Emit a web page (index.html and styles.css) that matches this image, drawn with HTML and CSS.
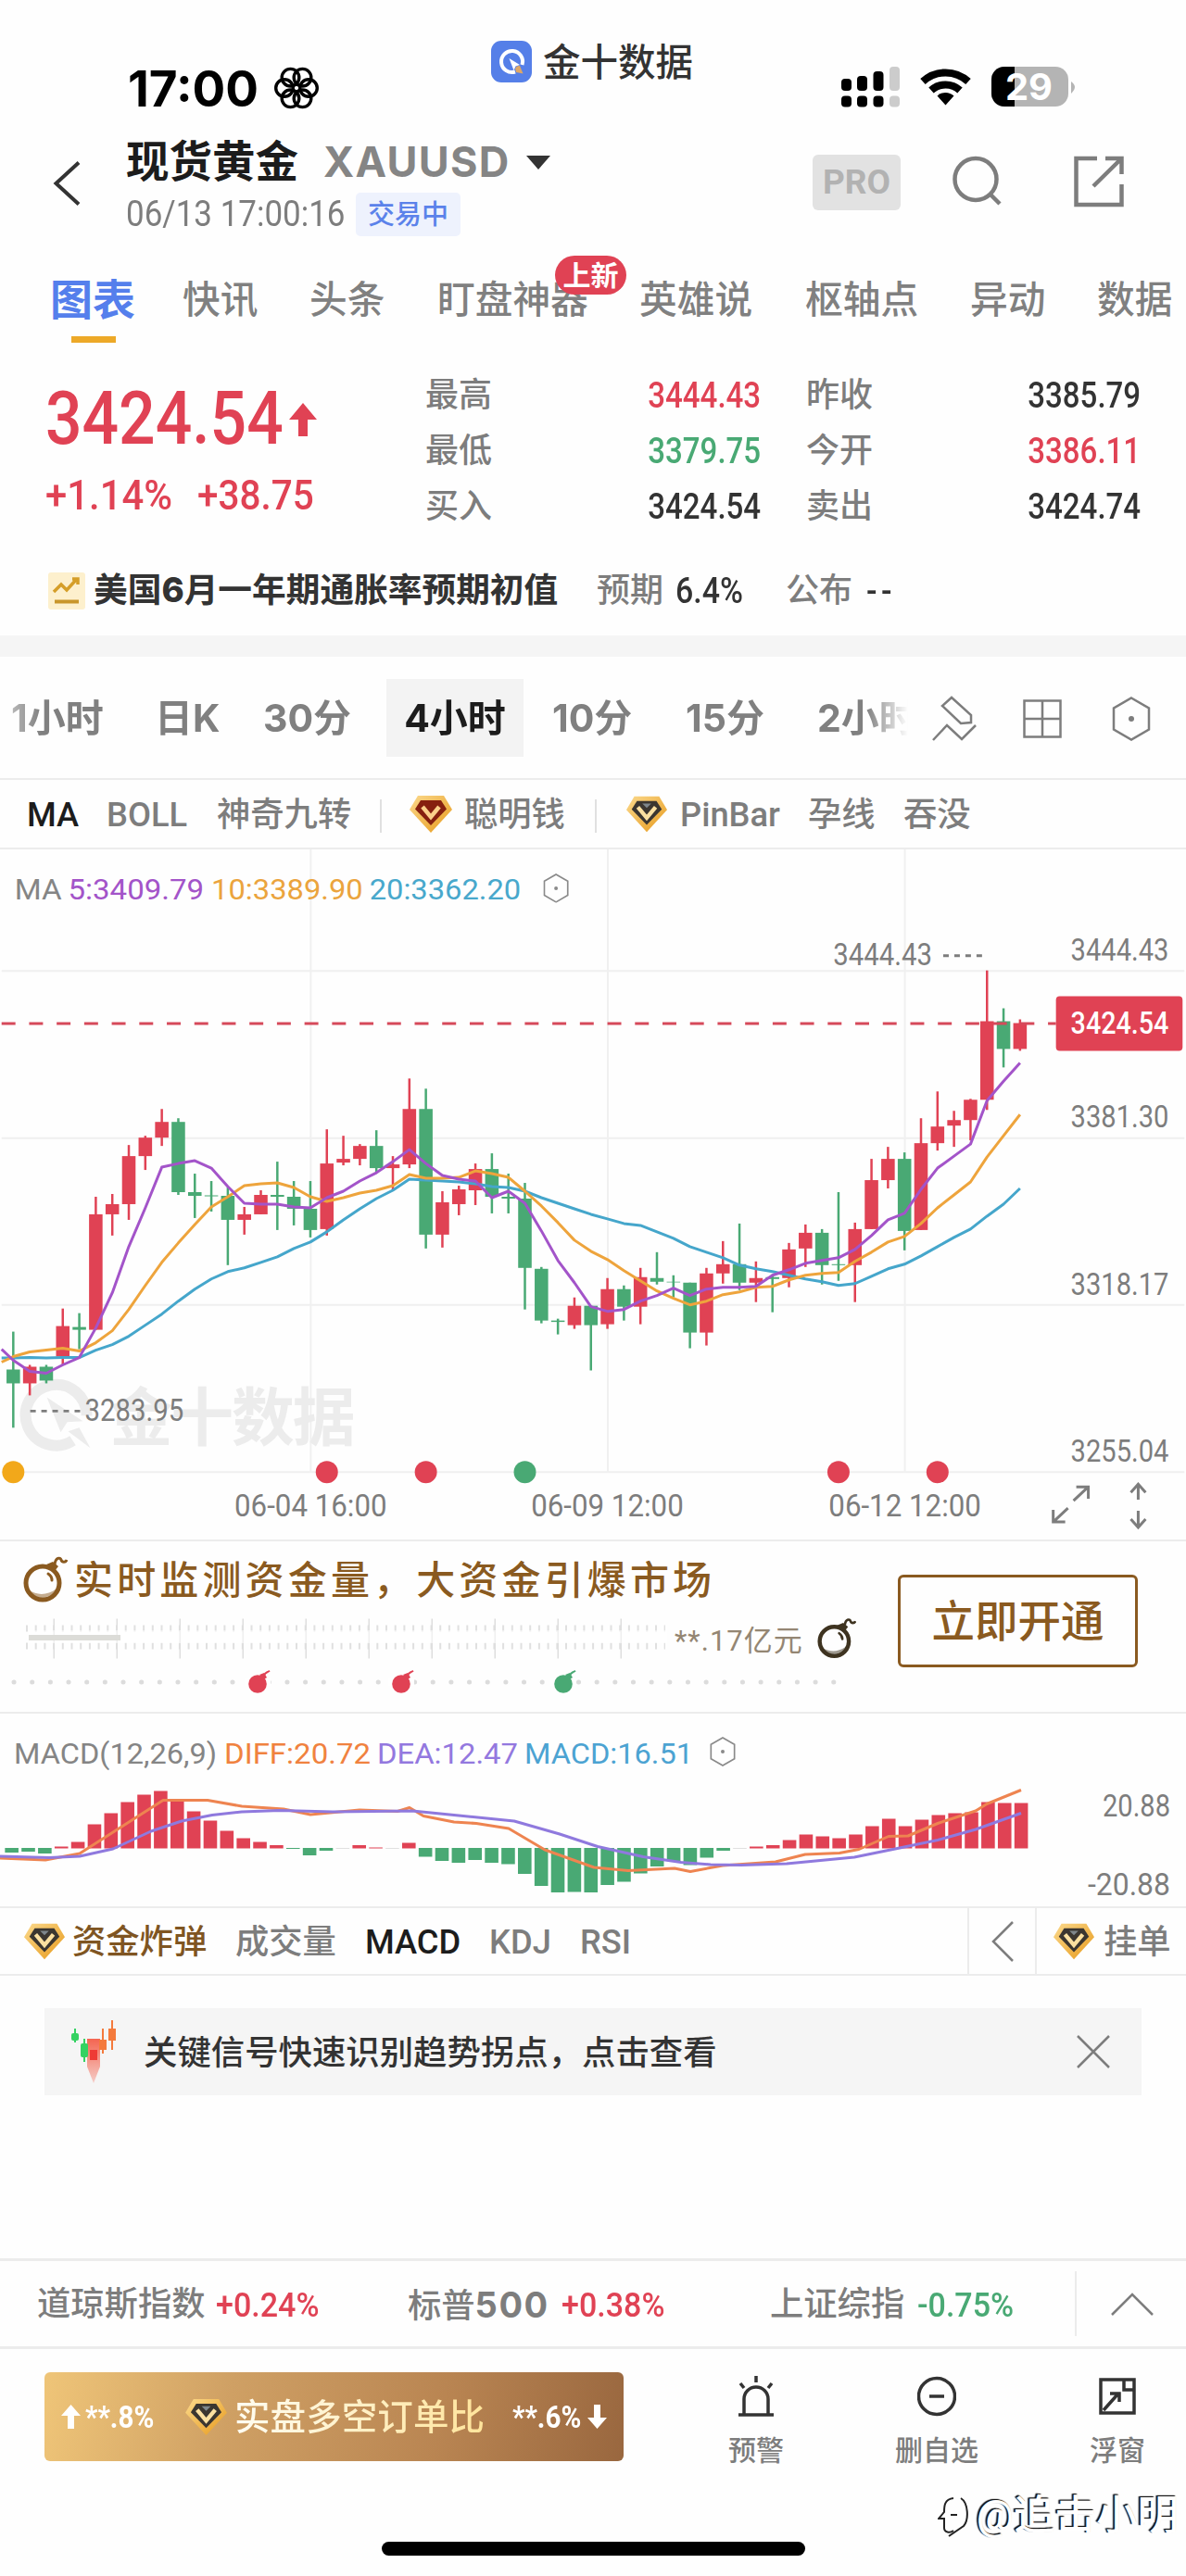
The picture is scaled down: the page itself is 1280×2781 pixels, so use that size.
FILE: index.html
```html
<!DOCTYPE html>
<html lang="zh-CN">

<head>
    <meta charset="UTF-8">
    <meta name="viewport" content="width=device-width, initial-scale=1.0">
    <title>现货黄金 XAUUSD</title>

    <link rel="stylesheet" href="styles.css">
</head>

<body>

    <!-- 公用图标 -->
    <svg class="defs" width="0" height="0">
        <defs>
            <linearGradient id="gold" x1="0" y1="0" x2="1" y2="1">
                <stop offset="0" stop-color="#fbd98c" />
                <stop offset="1" stop-color="#e79a1c" />
            </linearGradient>
            <linearGradient id="fall" x1="0" y1="0" x2="0" y2="1">
                <stop offset="0" stop-color="#f4553f" stop-opacity=".9" />
                <stop offset="1" stop-color="#f4553f" stop-opacity=".25" />
            </linearGradient>
            <symbol id="vip" viewBox="0 0 46 40">
                <path d="M9 0H37L46 15L23 40L0 15Z" fill="url(#gold)" />
                <path d="M12 5H34L40 14.500L23 32L6 14.500Z" fill="#3b3630" />
                <path d="M13 12L23 24L33 12" fill="none" stroke="#fbe0a0" stroke-width="4.500" />
                <path d="M18 8H28L23 13Z" fill="#7f878c" />
            </symbol>
            <symbol id="vip-red" viewBox="0 0 46 40">
                <path d="M9 0H37L46 15L23 40L0 15Z" fill="url(#gold)" />
                <path d="M12 5H34L40 14.500L23 32L6 14.500Z" fill="#86200f" />
                <path d="M14 12L23 23L32 12" fill="none" stroke="#fbd08a" stroke-width="4.500" />
            </symbol>
            <symbol id="hex" viewBox="0 0 42 48">
                <path d="M21 1.500L40 12.500V35.500L21 46.500L2 35.500V12.500Z" fill="none" stroke="currentColor" stroke-width="2.500" />
                <circle cx="21" cy="24" r="3" fill="currentColor" />
            </symbol>
            <symbol id="bomb-line" viewBox="0 0 48 50">
                <circle cx="21" cy="29" r="18" fill="none" stroke="currentColor" stroke-width="5" />
                <path d="M7 37C14 42 26 43 36 35C31 46 13 49 7 37Z" fill="currentColor" opacity=".5" />
                <path d="M25 9L32 6L38 11L34 16Z" fill="currentColor" />
                <path d="M34 9C35 1 40 1 41 4C42 7 46 7 47 4" fill="none" stroke="currentColor" stroke-width="3" />
                <path d="M27 19C30 21 31 23 31 26" fill="none" stroke="currentColor" stroke-width="3" stroke-linecap="round" />
            </symbol>
            <symbol id="bomb" viewBox="0 0 24 25">
                <circle cx="10" cy="15" r="9.800" fill="currentColor" />
                <path d="M12 5L17 3L20 8L17 10Z" fill="currentColor" />
                <path d="M17 6C18 2 20 3 23 .800" fill="none" stroke="currentColor" stroke-width="2" />
            </symbol>
        </defs>
    </svg>

    <!-- 状态栏 -->
    <div class="status">
        <div class="status-time">17:00</div>
        <svg class="status-flower" viewBox="-25 -25 50 50">
            <g fill="none" stroke="#000" stroke-width="3.400">
                <circle cx="-13" cy="0" r="9.300" />
                <circle cx="-6.500" cy="11.300" r="9.300" />
                <circle cx="6.500" cy="11.300" r="9.300" />
                <circle cx="13" cy="0" r="9.300" />
                <circle cx="6.500" cy="-11.300" r="9.300" />
                <circle cx="-6.500" cy="-11.300" r="9.300" />
            </g>
        </svg>
        <div class="brand">
            <svg width="44" height="45" viewBox="0 0 44 45">
                <rect width="44" height="45" rx="11" fill="#557fe8" />
                <path d="M26 33.500A11.500 11.500 0 1 1 33.500 26" fill="none" stroke="#fff" stroke-width="4" />
                <path d="M19.500 19L31 26L26.500 27.500L24.500 32Z" fill="#fff" />
                <path d="M26 30A5 5 0 0 1 31 27L34.500 35.500L27 34Z" fill="#dfa765" />
            </svg>
            <span>金十数据</span>
        </div>
        <svg class="status-right" width="256" height="46" viewBox="906 71 256 46">
            <g fill="#000">
                <rect x="909" y="85" width="11" height="13" rx="4" />
                <rect x="926" y="82" width="11" height="16" rx="4" />
                <rect x="943.500" y="77" width="11" height="21" rx="4" />
                <rect x="909" y="103.500" width="11" height="12" rx="4" />
                <rect x="926" y="103.500" width="11" height="12" rx="4" />
                <rect x="943.500" y="103.500" width="11" height="12" rx="4" />
            </g>
            <rect x="961" y="72" width="11" height="26" rx="4" fill="#ccc" />
            <rect x="961" y="103.500" width="11" height="12" rx="4" fill="#ccc" />
            <g fill="none" stroke="#000" stroke-width="8">
                <path d="M997 88A36 36 0 0 1 1046 88" />
                <path d="M1006 97.500A23 23 0 0 1 1037 97.500" />
            </g>
            <path d="M1012.500 103.500A13 13 0 0 1 1030.500 103.500L1021.500 113.500Z" fill="#000" />
            <rect x="1071" y="72" width="83" height="43" rx="14" fill="#b4b4b4" />
            <path d="M1096 72H1085A14 14 0 0 0 1071 86V101A14 14 0 0 0 1085 115H1096Z" fill="#000" />
            <path d="M1157 88Q1161 91 1161 94T1157 101Z" fill="#b4b4b4" />
            <text x="1086" y="108" textLength="51" lengthAdjust="spacingAndGlyphs" class="battery">29</text>
        </svg>
    </div>

    <!-- 标题 -->
    <div class="head">
        <svg width="30" height="48" viewBox="0 0 30 48">
            <path d="M28 1.500L3.500 24L28 46.500" fill="none" stroke="#333" stroke-width="4" />
        </svg>
        <div class="head-info">
            <div class="head-name">
                <h1>现货黄金</h1>
                <span class="code">XAUUSD</span>
                <i class="caret"></i>
            </div>
            <div class="head-time">
                <span class="num date">06/13 17:00:16</span>
                <span class="trading">交易中</span>
            </div>
        </div>
        <div class="pro">PRO</div>
        <svg width="54" height="56" viewBox="0 0 54 56" fill="none" stroke="#7d7d7d" stroke-width="4.500">
            <circle cx="25" cy="25.500" r="22.500" />
            <path d="M41 42L51 52" />
        </svg>
        <svg width="54" height="56" viewBox="0 0 54 56" fill="none" stroke="#7d7d7d" stroke-width="4.500">
            <path d="M25 3H2.500V53H51.500V31" />
            <path d="M34 3H51.500V20M51 3.500L21 33" />
        </svg>
    </div>

    <!-- 导航 -->
    <div class="nav">
        <a class="active">图表</a>
        <a>快讯</a>
        <a>头条</a>
        <a class="has-tip">盯盘神器<em>上新</em></a>
        <a>英雄说</a>
        <a>枢轴点</a>
        <a>异动</a>
        <a>数据</a>
    </div>

    <!-- 报价 -->
    <div class="quote">
        <div class="quote-main">
            <div class="price red">
                <span class="num">3424.54</span>
                <svg width="30" height="36" viewBox="0 0 30 36"><path d="M15 0L30 18H20V36H10V18H0Z" fill="#e04254" /></svg>
            </div>
            <div class="change red"><span class="num">+1.14%</span><span class="num">+38.75</span></div>
        </div>
        <div class="quote-list">
            <span>最高</span><b class="num red">3444.43</b><span>昨收</span><b class="num">3385.79</b>
            <span>最低</span><b class="num green">3379.75</b><span>今开</span><b class="num red">3386.11</b>
            <span>买入</span><b class="num">3424.54</b><span>卖出</span><b class="num">3424.74</b>
        </div>
    </div>

    <div class="news">
        <svg width="40" height="40" viewBox="0 0 40 40">
            <rect width="40" height="40" rx="3" fill="#fdf0cd" />
            <path d="M6 21L14 13L20 19L31 7M26 7H32V13" fill="none" stroke="#d59e28" stroke-width="3.500" />
            <path d="M7 31.500H33" stroke="#c9962b" stroke-width="4" />
        </svg>
        <strong>美国<i>6</i>月一年期通胀率预期初值</strong>
        <span>预期</span><b class="num">6.4%</b>
        <span>公布</span><b class="num none">--</b>
    </div>

    <div class="band"></div>

    <!-- 周期 -->
    <div class="period">
        <div class="period-list">
            <a>1小时</a>
            <a>日K</a>
            <a>30分</a>
            <a class="on">4小时</a>
            <a>10分</a>
            <a>15分</a>
            <a>2小时</a>
        </div>
        <div class="period-tool">
            <svg width="48" height="50" viewBox="0 0 48 50" fill="none" stroke="#7d7d7d" stroke-width="2.500">
                <path d="M21 2L42 21V29L31 30L11 11Z" />
                <path d="M1 48L16 32L32 47L47 32" />
            </svg>
            <svg width="42" height="42" viewBox="0 0 42 42" fill="none" stroke="#7d7d7d" stroke-width="2.500">
                <path d="M1.500 1.500H40.500V40.500H1.500ZM21 1.500V40.500M1.500 21H40.500" />
            </svg>
            <svg width="42" height="48"><use href="#hex" /></svg>
        </div>
    </div>

    <!-- 主图指标 -->
    <div class="target">
        <a class="on">MA</a>
        <a>BOLL</a>
        <a>神奇九转</a>
        <i class="line"></i>
        <svg width="46" height="40"><use href="#vip-red" /></svg>
        <a>聪明钱</a>
        <i class="line"></i>
        <svg width="44" height="40"><use href="#vip" /></svg>
        <a>PinBar</a>
        <a>孕线</a>
        <a>吞没</a>
    </div>

    <!-- K线图 -->
    <svg class="kline" width="1280" height="747" viewBox="0 917 1280 747">
        <path class="grid" d="M334.500 917V1591M656 917V1591M977.500 917V1591M0 1048.500H1280M0 1229.500H1280M0 1410H1280M0 1591H1280" />
        <g class="watermark">
            <path d="M77 1557A33 33 0 1 1 92 1530" />
            <path class="solid" d="M49 1510L88 1536L71 1537L64 1548ZM72 1547L84 1543L96 1565Z" />
            <text x="117" y="1557" textLength="266">金十数据</text>
        </g>
        <g id="candles"></g>
        <path class="now" d="M0 1105.500H1141" />
        <g id="ma"></g>
        <g id="marks"></g>

        <g class="legend">
            <text x="14" y="971" textLength="51" lengthAdjust="spacingAndGlyphs" fill="#858585">MA</text>
            <text x="72" y="971" textLength="147" lengthAdjust="spacingAndGlyphs" fill="#a354c9">5:3409.79</text>
            <text x="227" y="971" textLength="164" lengthAdjust="spacingAndGlyphs" fill="#eba43d">10:3389.90</text>
            <text x="398" y="971" textLength="164" lengthAdjust="spacingAndGlyphs" fill="#48a8cc">20:3362.20</text>
        </g>
        <use href="#hex" x="586" y="943" width="28" height="32" color="#8a8a8a" />

        <g class="din">
            <text x="900" y="1042.500" textLength="107" lengthAdjust="spacingAndGlyphs">3444.43</text>
            <text x="90" y="1536" textLength="107" lengthAdjust="spacingAndGlyphs">3283.95</text>
            <text x="1157" y="1037" textLength="106" lengthAdjust="spacingAndGlyphs">3444.43</text>
            <text x="1157" y="1218" textLength="106" lengthAdjust="spacingAndGlyphs">3381.30</text>
            <text x="1157" y="1399" textLength="106" lengthAdjust="spacingAndGlyphs">3318.17</text>
            <text x="1157" y="1580" textLength="106" lengthAdjust="spacingAndGlyphs">3255.04</text>
            <text x="252" y="1638.500" textLength="165" lengthAdjust="spacingAndGlyphs">06-04 16:00</text>
            <text x="573" y="1638.500" textLength="165" lengthAdjust="spacingAndGlyphs">06-09 12:00</text>
            <text x="895" y="1638.500" textLength="165" lengthAdjust="spacingAndGlyphs">06-12 12:00</text>
        </g>
        <path class="dash" d="M1019 1032H1062M31 1525H86" />
        <rect x="1141" y="1076" width="137" height="59" rx="4" fill="#e04254" />
        <text class="din now-text" x="1157" y="1116.500" textLength="106" lengthAdjust="spacingAndGlyphs">3424.54</text>

        <g fill="none" stroke="#7d7d7d" stroke-width="3">
            <path d="M1160 1622L1176 1607M1163 1607H1176V1620M1154 1630L1138 1645M1138 1632V1645H1151" />
            <path d="M1230 1621V1605M1222 1613L1230 1604L1238 1613M1230 1633V1650M1222 1642L1230 1651L1238 1642" />
        </g>
    </svg>

    <!-- 推广 -->
    <div class="promo">
        <div class="promo-left">
            <div class="promo-title">
                <svg width="48" height="50"><use href="#bomb-line" /></svg>
                <span>实时监测资金量，大资金引爆市场</span>
            </div>
            <div class="promo-ruler">
                <svg width="694" height="44" viewBox="26 1745 694 44">
                    <path d="M28 1756H718M28 1775H718" stroke="#e0e0e0" stroke-width="7" stroke-dasharray="2 7.700" />
                    <path d="M57.500 1767H718" stroke="#dedede" stroke-width="43" stroke-dasharray="1.500 66.500" />
                    <rect x="31" y="1758" width="690" height="14" fill="#fff" opacity=".5" />
                    <rect x="31" y="1763" width="99" height="6" fill="#dcdcd8" />
                </svg>
                <span>**.17亿元</span>
                <svg class="dark" width="42" height="45"><use href="#bomb-line" /></svg>
            </div>
            <svg class="promo-dots" width="920" height="26" viewBox="0 1803 920 26">
                <path d="M15 1816H915" stroke="#dcdcdc" stroke-width="5" stroke-linecap="round" stroke-dasharray="0.100 19.560" />
                <path d="M264 1816H292M419 1816H447M594 1816H622" stroke="#fff" stroke-width="8" />
                <use href="#bomb" x="268" y="1803" width="24" height="25" color="#e04254" />
                <use href="#bomb" x="423" y="1803" width="24" height="25" color="#e04254" />
                <use href="#bomb" x="598" y="1803" width="24" height="25" color="#49a974" />
            </svg>
        </div>
        <a class="promo-btn">立即开通</a>
    </div>

    <!-- MACD -->
    <svg class="macd" width="1280" height="208" viewBox="0 1850 1280 208">
        <g class="legend">
            <text x="15" y="1904" textLength="219" lengthAdjust="spacingAndGlyphs" fill="#858585">MACD(12,26,9)</text>
            <text x="242" y="1904" textLength="158" lengthAdjust="spacingAndGlyphs" fill="#f0823f">DIFF:20.72</text>
            <text x="407" y="1904" textLength="152" lengthAdjust="spacingAndGlyphs" fill="#9378df">DEA:12.47</text>
            <text x="566" y="1904" textLength="182" lengthAdjust="spacingAndGlyphs" fill="#4ca3d2">MACD:16.51</text>
        </g>
        <use href="#hex" x="766" y="1875" width="28" height="32" color="#8a8a8a" />
        <g id="macd-bars"></g>
        <g id="macd-lines"></g>
        <g class="din">
            <text x="1190" y="1960.500" textLength="73" lengthAdjust="spacingAndGlyphs">20.88</text>
            <text x="1174" y="2046" textLength="89" lengthAdjust="spacingAndGlyphs">-20.88</text>
        </g>
    </svg>

    <!-- 副图指标 -->
    <div class="sub">
        <svg width="44" height="40"><use href="#vip" /></svg>
        <a class="brown">资金炸弹</a>
        <a>成交量</a>
        <a class="on">MACD</a>
        <a>KDJ</a>
        <a>RSI</a>
        <div class="sub-back">
            <svg width="24" height="44" viewBox="0 0 24 44"><path d="M23 1L2 22L23 43" fill="none" stroke="#7d7d7d" stroke-width="2.500" /></svg>
        </div>
        <svg width="44" height="40"><use href="#vip" /></svg>
        <a>挂单</a>
    </div>

    <!-- 提示 -->
    <div class="notice">
        <svg width="52" height="68" viewBox="0 0 52 68">
            <path d="M18 20H32V50L25 68L18 50Z" fill="url(#fall)" />
            <path d="M5 9V24M15 20V45" stroke="#35d262" stroke-width="2" />
            <rect x="1" y="14" width="8" height="8" rx="2" fill="#35d262" />
            <rect x="11" y="25" width="8" height="15" rx="2" fill="#35d262" />
            <path d="M35 9V36M45 0V32" stroke="#f47a3c" stroke-width="2" />
            <rect x="31" y="21" width="8" height="11" fill="#f47a3c" />
            <rect x="41" y="9" width="8" height="13" fill="#f47a3c" />
            <rect x="21" y="32" width="8" height="11" fill="#ee3b35" />
        </svg>
        <span>关键信号快速识别趋势拐点，点击查看</span>
        <svg width="36" height="36" viewBox="0 0 36 36"><path d="M1 1L35 35M35 1L1 35" stroke="#7d7d7d" stroke-width="2.500" /></svg>
    </div>

    <!-- 指数 -->
    <div class="index">
        <span>道琼斯指数</span><b class="num red">+0.24%</b>
        <span>标普<i>500</i></span><b class="num red">+0.38%</b>
        <span>上证综指</span><b class="num green">-0.75%</b>
        <div class="index-more">
            <svg width="46" height="25" viewBox="0 0 46 25"><path d="M1 24L23 2L45 24" fill="none" stroke="#7d7d7d" stroke-width="2.500" /></svg>
        </div>
    </div>

    <!-- 底部 -->
    <div class="foot">
        <div class="order">
            <svg width="21" height="26" viewBox="0 0 21 26"><path d="M10.500 0L21 12H14V26H7V12H0Z" fill="#fff" /></svg>
            <b class="num">**.8%</b>
            <svg width="45" height="39"><use href="#vip" /></svg>
            <span>实盘多空订单比</span>
            <b class="num">**.6%</b>
            <svg width="21" height="26" viewBox="0 0 21 26"><path d="M10.500 26L0 14H7V0H14V14H21Z" fill="#fff" /></svg>
        </div>
        <a>
            <svg width="42" height="44" viewBox="0 0 42 44" fill="none" stroke="#333" stroke-width="3.500">
                <path d="M2 42H40M8 41V25A13 13 0 0 1 34 25V41M21 0V7M4 8L8 13M38 8L34 13" />
            </svg>
            预警
        </a>
        <a>
            <svg width="42" height="44" viewBox="0 0 42 44" fill="none" stroke="#333" stroke-width="3.500">
                <circle cx="21" cy="22" r="19.500" />
                <path d="M13 22H29" />
            </svg>
            删自选
        </a>
        <a>
            <svg width="42" height="44" viewBox="0 0 42 44" fill="none" stroke="#333" stroke-width="3.500">
                <path d="M3 4H39V40H3Z" />
                <path d="M28 4V15H39M6 37L22 19M13 19H23V28" />
            </svg>
            浮窗
        </a>
    </div>

    <div class="home"></div>
    <div class="sign">
        <svg width="36" height="48" viewBox="0 0 36 48" fill="none" stroke="#222" stroke-width="2">
            <path d="M17 5C7 6 7 14 7 20L1 27H7V37C7 42 13 43 17 40M25 5C33 10 34 28 28 35L12 46M14 23H21" />
        </svg>
        <span>@追击小明</span>
    </div>

    <script src="chart.js"></script>

</body>

</html>
```

FILE: styles.css
```css
* {
    box-sizing: border-box;
}

body {
    width: 1280px;
    height: 2781px;
    margin: 0;
    overflow: hidden;
    position: relative;
    background-color: #fefefe;
    color: #333;
    font-family: Roboto, "Noto Sans CJK SC", sans-serif;
    line-height: 1;
    white-space: nowrap;
}

h1,
i,
em {
    margin: 0;
    font-style: normal;
}

svg {
    display: block;
    flex-shrink: 0;
}

.defs {
    position: absolute;
}

/* 窄体数字 */

.num {
    display: inline-block;
    font-family: Roboto, sans-serif;
    font-weight: 500;
    transform: scaleX(.87);
    transform-origin: left center;
}

.red {
    color: #e04254;
}

.green {
    color: #49a974;
}

/* 状态栏 */

.status {
    display: grid;
    grid-template-columns: 157px 235px 375px 256px;
    height: 150px;
    padding-left: 138px;
}

.status-time {
    padding-top: 70px;
    font: 700 53px/52px Inter, sans-serif;
    color: #000;
}

.status-flower {
    width: 50px;
    height: 50px;
    margin-top: 70px;
}

.brand {
    display: flex;
    gap: 12px;
    padding-top: 44px;
    font-size: 40.500px;
    font-weight: 500;
    line-height: 49px;
}

.status-right {
    margin-top: 71px;
}

.battery {
    font: 700 39px Inter, sans-serif;
    fill: #fff;
}

/* 标题 */

.head {
    display: grid;
    grid-template-columns: 79px 741px 151px 131px 54px;
    align-items: center;
    height: 115px;
    padding-left: 57px;
}

.head > svg {
    margin-top: -24px;
}

.head > svg:first-child {
    margin-top: -20px;
}

.head-info {
    align-self: start;
}

.head-name {
    display: flex;
    align-items: center;
    height: 50px;
}

.head-name h1 {
    width: 213px;
    font-size: 46.500px;
    font-weight: 700;
    color: #1c1c1c;
}

.code {
    width: 219px;
    font: 700 45px/44px Inter, sans-serif;
    color: #858585;
    letter-spacing: 1.300px;
}

.caret {
    border: 13px solid transparent;
    border-top: 15px solid #333;
    border-bottom: 0;
}

.head-time {
    display: flex;
    align-items: center;
    height: 48px;
    margin-top: 7px;
}

.date {
    width: 248px;
    font-size: 38px;
    font-weight: 400;
    color: #7d7d7d;
    transform: scaleX(.92);
}

.trading {
    width: 113px;
    height: 47px;
    border-radius: 5px;
    background-color: #eef2fd;
    color: #5b82ea;
    font-size: 29px;
    font-weight: 500;
    line-height: 48px;
    text-align: center;
}

.pro {
    width: 95px;
    height: 60px;
    margin-top: -21px;
    border-radius: 6px;
    background-color: #e2e2e2;
    color: #b2b2b2;
    font: 700 37px/60px Roboto, sans-serif;
    text-align: center;
}

/* 导航 */

.nav {
    display: grid;
    grid-template-columns: 143px 137px 138px 218px 179px 178px 137px 95px;
    align-items: center;
    height: 113px;
    padding: 5px 0 0 54px;
    color: #808080;
    font-size: 40.700px;
    font-weight: 500;
}

.nav .active {
    position: relative;
    color: #557fec;
    font-size: 46px;
    font-weight: 700;
}

.nav .active::after {
    position: absolute;
    left: 23px;
    top: 62px;
    width: 48px;
    height: 7px;
    background-color: #eda928;
    content: "";
}

.has-tip {
    position: relative;
}

.has-tip em {
    position: absolute;
    left: 127px;
    top: -28px;
    width: 77px;
    height: 42px;
    border-radius: 21px;
    background-color: #e04254;
    color: #fff;
    font-size: 30px;
    font-weight: 700;
    line-height: 43px;
    text-align: center;
}

/* 报价 */

.quote {
    display: grid;
    grid-template-columns: 410px 1fr;
    height: 207px;
    padding-left: 49px;
}

.price {
    display: flex;
    align-items: center;
    height: 80px;
    margin-top: 34px;
    font-size: 80px;
}

.price .num {
    width: 263px;
}

.price svg {
    margin-top: 2px;
}

.change {
    display: grid;
    grid-template-columns: 164px 1fr;
    margin-top: 20px;
    font-size: 45px;
}

.change .num {
    transform: scaleX(.93);
}

.change .num:last-child {
    transform: scaleX(.9);
}

.quote-list {
    display: grid;
    grid-template-columns: 120px 291px 120px 241px;
    grid-auto-rows: 60px;
    align-items: center;
    padding-top: 19px;
    color: #7d7d7d;
    font-size: 36px;
    font-weight: 500;
}

.quote-list .num {
    justify-self: end;
    color: #333;
    font-size: 38px;
    transform-origin: right center;
}

.quote-list .num:nth-child(4n+2) {
    margin-right: 49px;
}

.quote-list .red {
    color: #e04254;
}

.quote-list .green {
    color: #49a974;
}

.news {
    display: grid;
    grid-template-columns: 49px 543px 85px 119px 87px 60px;
    align-items: center;
    height: 101px;
    padding: 5px 0 0 52px;
    color: #7d7d7d;
    font-size: 36px;
    font-weight: 500;
}

.news strong {
    color: #333;
    font-size: 36.700px;
    font-weight: 700;
}

.news i {
    font-family: Inter, sans-serif;
    font-weight: 800;
}

.news .num {
    color: #333;
    font-size: 39px;
}

.news .none {
    letter-spacing: 5px;
}

.band {
    height: 23px;
    background-color: #f5f5f5;
}

/* 周期 */

.period {
    display: flex;
    height: 133px;
    border-bottom: 2px solid #ececec;
}

.period-list {
    display: grid;
    grid-template-columns: 155px 117px 132px 180px 144px 142px 98px;
    align-items: center;
    width: 980px;
    padding: 1px 0 0 12px;
    overflow: hidden;
    color: #808080;
    font: 700 41px/1 Inter, "Noto Sans CJK SC", sans-serif;
    -webkit-mask-image: linear-gradient(90deg, rgba(0, 0, 0, .4), #000 45px, #000 935px, transparent);
    mask-image: linear-gradient(90deg, rgba(0, 0, 0, .4), #000 45px, #000 935px, transparent);
}

.period-list .on {
    width: 148px;
    height: 84px;
    margin-left: 1px;
    background-color: #f3f3f3;
    color: #1c1c1c;
    line-height: 84px;
    text-align: center;
}

.period-tool {
    display: grid;
    grid-template-columns: 98px 96px 42px;
    align-items: center;
    padding: 2px 0 0 26px;
    color: #7d7d7d;
}

/* 指标 */

.target {
    display: grid;
    grid-template-columns: 86px 119px 176px 32px 59px 141px 34px 58px 138px 103px 80px;
    align-items: center;
    height: 75px;
    padding: 4px 0 0 29px;
    border-bottom: 2px solid #ececec;
    color: #7d7d7d;
    font-size: 36.300px;
    font-weight: 500;
}

.target svg {
    margin-top: -4px;
}

.target .on,
.sub .on {
    color: #1c1c1c;
}

.line {
    width: 2px;
    height: 36px;
    background-color: #e0e0e0;
}

/* K线 */

.kline {
    border-bottom: 2px solid #ececec;
}

.grid {
    fill: none;
    stroke: #f0f0f0;
    stroke-width: 2;
}

.now {
    fill: none;
    stroke: #d6495a;
    stroke-width: 3;
    stroke-dasharray: 15 14.800;
}

.watermark {
    fill: none;
    stroke: #ececec;
    stroke-width: 12;
}

.watermark text,
.watermark .solid {
    fill: #ececec;
    stroke: none;
    font-size: 68px;
    font-weight: 700;
}

.legend {
    font-size: 32px;
}

.din {
    fill: #7d7d7d;
    font-size: 33px;
}

.now-text {
    fill: #fff;
    font-weight: 500;
}

.dash {
    fill: none;
    stroke: #7d7d7d;
    stroke-width: 3;
    stroke-dasharray: 6 6;
}

/* 推广 */

.promo {
    display: flex;
    height: 186px;
    border-bottom: 2px solid #ececec;
}

.promo-left {
    width: 969px;
}

.promo-title {
    display: flex;
    align-items: center;
    gap: 7px;
    height: 50px;
    margin: 16px 0 0 25px;
    color: #8a5a20;
    font-size: 42px;
    font-weight: 500;
    letter-spacing: 4.150px;
}

.promo-title span {
    padding-top: 3px;
}

.promo-ruler {
    display: grid;
    grid-template-columns: 702px 154px 42px;
    align-items: center;
    height: 44px;
    margin: 16px 0 0 26px;
    color: #948673;
    font-size: 31px;
    letter-spacing: 1px;
}

.promo-ruler span {
    padding-top: 5px;
}

.dark {
    color: #3e3320;
}

.promo-dots {
    margin-top: 13px;
}

.promo-btn {
    width: 259px;
    height: 100px;
    margin-top: 36px;
    border: 3px solid #8a5a20;
    border-radius: 6px;
    color: #8a5a20;
    font-size: 46.500px;
    font-weight: 500;
    line-height: 97px;
    text-align: center;
}

/* 副图 */

.sub {
    display: grid;
    grid-template-columns: 52px 176px 140px 134px 98px 418px 93px 54px 80px;
    align-items: center;
    height: 75px;
    padding-left: 26px;
    border-top: 2px solid #ececec;
    border-bottom: 2px solid #ececec;
    color: #7d7d7d;
    font-size: 36.300px;
    font-weight: 500;
}

.sub > a {
    padding-top: 3px;
}

.sub .brown {
    color: #7f5522;
}

.sub-back {
    display: flex;
    align-items: center;
    justify-content: center;
    width: 75px;
    height: 71px;
    border-left: 2px solid #ececec;
    border-right: 2px solid #ececec;
}

.notice {
    display: grid;
    grid-template-columns: 79px 1007px 36px;
    align-items: center;
    width: 1184px;
    height: 94px;
    margin: 35px 48px 176px;
    padding-left: 28px;
    background-color: #f5f5f5;
    font-size: 36.400px;
    font-weight: 500;
}

.notice span {
    padding-top: 5px;
}

.index {
    display: grid;
    grid-template-columns: 193px 207px 166px 225px 159px 170px 120px;
    align-items: center;
    height: 98px;
    padding-left: 40px;
    border-top: 3px solid #ececec;
    border-bottom: 3px solid #ececec;
    color: #7d7d7d;
    font-size: 36.300px;
    font-weight: 500;
}

.index > span,
.index > b {
    padding-top: 3px;
}

.index i {
    font: 700 38px/1 Inter, sans-serif;
    letter-spacing: 1.500px;
}

.index .num {
    font-size: 37px;
    transform: scaleX(.92);
}

.index-more {
    display: flex;
    align-items: center;
    justify-content: center;
    height: 70px;
    padding-left: 2px;
    border-left: 2px solid #ececec;
}

/* 底部 */

.foot {
    display: grid;
    grid-template-columns: 673px 195px 195px 190px;
    height: 207px;
    padding: 25px 0 0 48px;
}

.foot > a {
    display: flex;
    flex-direction: column;
    align-items: center;
    gap: 22px;
    width: 190px;
    padding-top: 4px;
    color: #7d7d7d;
    font-size: 30px;
    font-weight: 500;
}

.order {
    display: grid;
    grid-template-columns: 26px 108px 53px 300px 81px 21px;
    align-items: center;
    width: 625px;
    height: 96px;
    padding-left: 18px;
    border-radius: 6px;
    background: linear-gradient(100deg, #efc578, #cfa064 32%, #b98552 68%, #99673f);
    color: #fff;
}

.order .num {
    font-size: 34px;
    font-weight: 700;
}

.order span {
    justify-self: start;
    padding-top: 2px;
    font-size: 38.600px;
    font-weight: 500;
    background: linear-gradient(90deg, #fffdf2, #ffe49b);
    -webkit-background-clip: text;
    background-clip: text;
    color: transparent;
}

.home {
    width: 457px;
    height: 15px;
    margin: 1px 0 0 412px;
    border-radius: 8px;
    background-color: #000;
}

/* 署名浮在页面右下角 */

.sign {
    display: flex;
    position: absolute;
    right: 8px;
    bottom: 41px;
    align-items: center;
    gap: 6px;
    color: #fff;
    font-size: 44.500px;
    font-weight: 500;
    text-shadow: -1px -1px 1px #111, -2px -1px 1px #222;
}
```

FILE: chart.js
```javascript
//每根K线:最高,实体上沿,实体下沿,最低,涨跌(1涨 0跌)
var candles = [
    [1439, 1480, 1495, 1543, 0], [1475, 1477, 1495, 1508, 1], [1475, 1477, 1492, 1495, 0],
    [1414, 1433, 1466, 1475, 1], [1419, 1434, 1437, 1458, 0], [1293, 1312, 1437, 1437, 1],
    [1290, 1301, 1312, 1335, 1], [1237, 1249, 1301, 1318, 1], [1227, 1229, 1249, 1264, 1],
    [1198, 1212, 1229, 1238, 1], [1208, 1212, 1288, 1291, 0], [1268, 1288, 1292, 1316, 0],
    [1276, 1291.5, 1292.5, 1309, 0], [1283, 1292, 1318, 1367, 0], [1304, 1312, 1318, 1334, 1],
    [1286, 1291, 1312, 1312, 1], [1255, 1291, 1293, 1329, 0], [1276, 1293, 1306, 1324, 0],
    [1276, 1306, 1329, 1337, 0], [1220, 1257, 1328, 1335, 1], [1227, 1252, 1256, 1259, 1],
    [1236, 1238, 1252, 1259, 1], [1221, 1238, 1262, 1267, 0], [1249, 1258, 1262, 1286, 1],
    [1165, 1198, 1258, 1262, 1], [1176, 1198, 1334, 1349, 0], [1287, 1299, 1334, 1348, 1],
    [1281, 1285, 1301, 1313, 1], [1257, 1263, 1286, 1302, 1], [1246, 1263, 1293, 1311, 0],
    [1268, 1293, 1295, 1311, 0], [1278, 1295, 1370, 1415, 0], [1369, 1371, 1427, 1430, 0],
    [1425, 1427, 1428.5, 1442, 0], [1402, 1411, 1432, 1436, 1], [1411, 1411, 1432, 1481, 0],
    [1381, 1393, 1431, 1436, 1], [1389, 1393, 1412, 1427, 0], [1370, 1380, 1412, 1431, 1],
    [1353, 1381, 1385, 1388, 0], [1378, 1385, 1385.7, 1402, 0], [1386, 1386, 1440, 1457, 0],
    [1370, 1376, 1440, 1454, 1], [1341, 1366, 1376, 1387, 1], [1322, 1366, 1386, 1394, 0],
    [1363, 1381, 1386, 1407, 1], [1377, 1380, 1382, 1418, 0], [1343, 1350, 1381, 1391, 1],
    [1323, 1332, 1349, 1369, 1], [1328, 1332, 1367, 1388, 0], [1288, 1366, 1367, 1384, 0],
    [1321, 1328, 1367, 1407, 1], [1252, 1275, 1328, 1328, 1], [1239, 1252, 1275, 1284, 1],
    [1245, 1252, 1330, 1351, 0], [1208, 1235, 1329, 1329, 1], [1179, 1217, 1235, 1243, 1],
    [1200, 1210, 1216, 1239, 1], [1187, 1188, 1210, 1232, 1], [1048, 1103, 1188, 1199, 1],
    [1089, 1103, 1133, 1153, 0], [1101, 1105, 1133, 1135, 1]
];

var ma5 = [1470, 1482, 1484, 1475, 1467, 1435, 1397, 1347, 1305, 1261, 1257, 1254, 1262, 1282, 1300, 1301, 1301, 1304, 1305, 1294, 1287, 1276, 1267, 1255, 1242, 1257, 1270, 1274, 1276, 1294, 1287, 1300, 1330, 1362, 1386, 1412, 1417, 1415, 1406, 1400, 1392, 1400, 1393, 1391, 1391, 1390, 1378, 1372, 1365, 1362, 1359, 1350, 1335, 1318, 1311, 1285, 1262, 1249, 1236, 1189, 1168, 1148];
var ma10 = [1466, 1461, 1459, 1457, 1460, 1451, 1438, 1415, 1389, 1364, 1343, 1323, 1304, 1293, 1281, 1279, 1278, 1283, 1293, 1298, 1294, 1289, 1286, 1281, 1269, 1273, 1273, 1272, 1265, 1268, 1272, 1287, 1303, 1321, 1340, 1352, 1361, 1373, 1384, 1395, 1403, 1410, 1406, 1399, 1396, 1391, 1390, 1383, 1378, 1376, 1375, 1363, 1353, 1342, 1336, 1322, 1305, 1291, 1277, 1250, 1227, 1204];
var ma20 = [1467.5, 1467, 1467.5, 1467, 1467, 1459, 1453, 1444, 1432, 1420, 1406, 1393, 1382, 1374, 1370, 1364, 1358, 1349, 1342, 1331, 1318, 1306, 1295, 1286, 1274, 1275, 1276, 1277, 1279, 1282, 1283, 1287, 1294, 1300, 1306, 1312, 1317, 1322, 1324, 1331, 1338, 1347, 1353, 1359, 1367, 1371, 1374, 1378, 1382, 1385, 1389, 1387, 1379, 1371, 1366, 1357, 1347, 1337, 1328, 1314, 1301, 1284];

//MACD柱,正数朝上
var bars = [-5, -4, -6, 2, 7, 26, 38, 50, 58, 62, 51, 40, 30, 19, 11, 7, 3.5, -1, -8, -3, 0, 3.5, 1, 0, 6, -9.5, -14, -16, -13, -16, -17.5, -28, -41, -48, -47.5, -48, -40, -36.5, -27.5, -20, -14, -18.5, -10.5, -3, 0, 2, 3.5, 9, 15, 13, 11, 15, 24, 32, 24, 31, 36, 38, 39, 50, 49, 49];
var diff = '0,2006 49,2008 86,2001 176,1943.5 224,1943.5 261,1950 306,1953 335,1959 388,1954 429,1955.5 442,1951.5 457,1960.5 490,1967 514,1968.5 549,1974 588,1997 641,2016 678,2019.5 728,2017 745,2020.5 780,2014 837,2010 869,2002 906,2000.5 927,1996.5 959,1982.5 980,1982 1012,1968.5 1053,1955 1065,1947.5 1102,1932.5';
var dea = '0,2004 53,2005.5 86,2004 122,1996 163,1977 196,1966 229,1959.5 261,1956 302,1954.5 359,1956 445,1955 490,1959.5 555,1966 604,1980 645,1993.5 694,2004.5 735,2010.5 767,2013 800,2013.5 849,2012 922,2005 971,1995 1012,1986.5 1053,1975 1102,1957.5';

//下方圆点
var marks = [[0, '#f2a81a'], [19, '#e04254'], [25, '#e04254'], [31, '#49a974'], [50, '#e04254'], [56, '#e04254']];

function px(i) {
    return 12.65 + i * 17.86;
}

function add(id, name, attrs) {
    var el = document.createElementNS('http://www.w3.org/2000/svg', name);
    for (var k in attrs) {
        el.setAttribute(k, attrs[k]);
    }
    document.getElementById(id).appendChild(el);
}

function line(id, points, color) {
    add(id, 'polyline', { points: points, fill: 'none', stroke: color, 'stroke-width': 3, 'stroke-linejoin': 'round' });
}

candles.forEach(function(c, i) {
    var color = c[4] ? '#e04254' : '#49a974';
    add('candles', 'rect', { x: px(i) - 1.25, y: c[0], width: 2.5, height: c[3] - c[0], fill: color });
    add('candles', 'rect', { x: px(i) - 7.3, y: c[1], width: 14.6, height: c[2] - c[1], fill: color });
});

[[ma20, '#45a6cb', 1467.5], [ma10, '#eea43c', 1472], [ma5, '#a354c9', 1458]].forEach(function(m) {
    var points = m[0].map(function(y, i) {
        return px(i) + ',' + y;
    });
    line('ma', '0,' + m[2] + ' ' + points.join(' '), m[1]);
});

marks.forEach(function(m) {
    add('marks', 'circle', { cx: px(m[0]), cy: 1591, r: 12, fill: m[1] });
});

bars.forEach(function(v, i) {
    var h = Math.max(Math.abs(v), .6);
    add('macd-bars', 'rect', {
        x: px(i) - 7.3,
        y: v > 0 ? 1995.5 - h : 1995,
        width: 14.6,
        height: h,
        fill: v > 0 ? '#e04254' : v < 0 ? '#49a974' : '#ccc'
    });
});

line('macd-lines', diff, '#ee8450');
line('macd-lines', dea, '#8f79de');
```
